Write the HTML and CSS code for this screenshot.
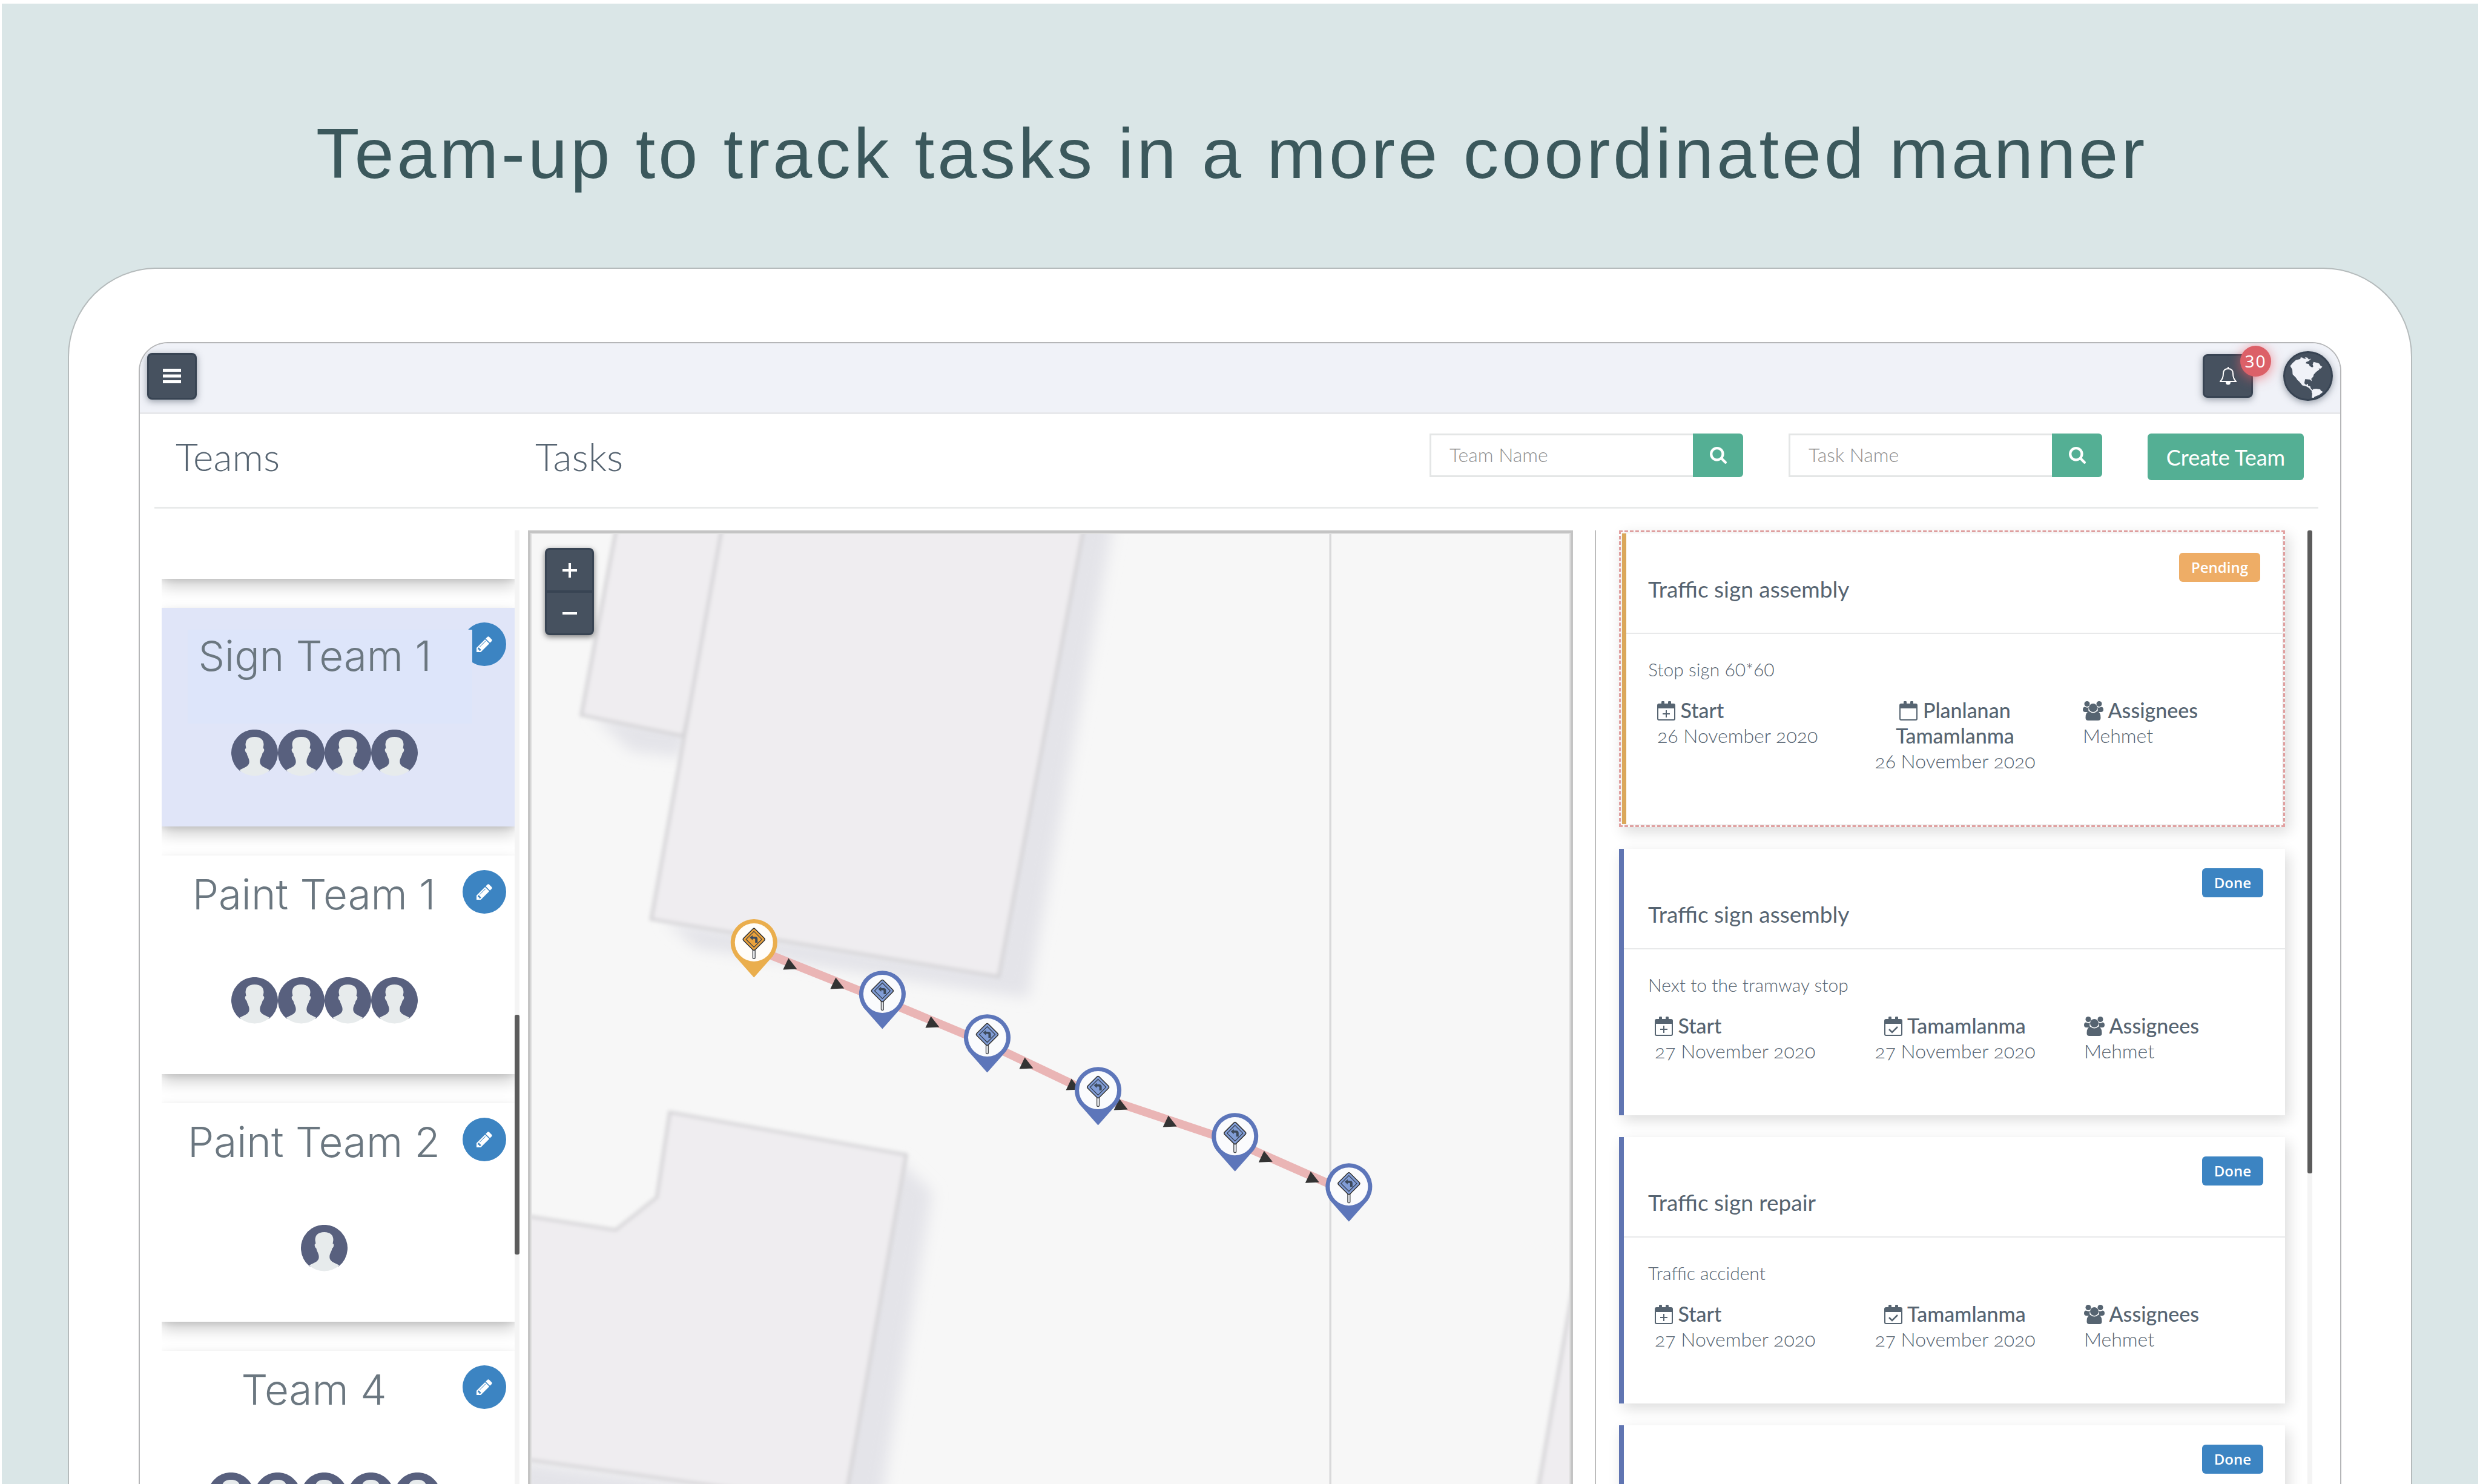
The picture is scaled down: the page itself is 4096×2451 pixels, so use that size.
FILE: index.html
```html
<!DOCTYPE html>
<html lang="en">
<head>
<meta charset="utf-8">
<title>Team tasks</title>
<meta name="viewport" content="width=device-width, initial-scale=1">
<link rel="stylesheet" href="styles.css">
</head>
<body>
<svg class="sprite" aria-hidden="true">
  <symbol id="i-pencil" viewBox="128 128 1536 1536"><path d="M491 1536l91-91-235-235-91 91v107h128v128h107zm523-928q0-22-22-22-10 0-17 7l-542 542q-7 7-7 17 0 22 22 22 10 0 17-7l542-542q7-7 7-17zm-54-192l416 416-832 832h-416v-416zm683 96q0 53-37 90l-166 166-416-416 166-165q36-38 90-38 53 0 91 38l235 234q37 39 37 91z"/></symbol>
  <symbol id="i-search" viewBox="64 128 1664 1664"><path d="M1216 832q0-185-131.500-316.500t-316.500-131.500-316.500 131.500-131.500 316.500 131.500 316.500 316.500 131.500 316.500-131.500 131.500-316.500zm512 832q0 52-38 90t-90 38q-54 0-90-38l-343-342q-179 124-399 124-143 0-273.500-55.500t-225-150-150-225-55.500-273.500 55.500-273.500 150-225 225-150 273.500-55.500 273.500 55.500 225 150 150 225 55.500 273.500q0 220-124 399l343 343q37 37 37 90z"/></symbol>
  <symbol id="i-calendar" viewBox="0 0 30 32"><path d="M3 4h4V2a2 2 0 0 1 5 0v2h6V2a2 2 0 0 1 5 0v2h4a3 3 0 0 1 3 3v22a3 3 0 0 1-3 3H3a3 3 0 0 1-3-3V7a3 3 0 0 1 3-3zM2 12v17a1 1 0 0 0 1 1h24a1 1 0 0 0 1-1V12z" fill-rule="evenodd"/></symbol>
  <symbol id="i-calendar-plus" viewBox="0 0 30 32"><use href="#i-calendar" width="30" height="32"/><path d="M14 15h2v5h5v2h-5v5h-2v-5H9v-2h5z"/></symbol>
  <symbol id="i-calendar-check" viewBox="0 0 30 32"><use href="#i-calendar" width="30" height="32"/><path d="M8 21l5 5 9-9" fill="none" stroke="currentColor" stroke-width="2.500"/></symbol>
  <symbol id="i-users" viewBox="0 0 34 32"><circle cx="7" cy="4.500" r="4.500"/><circle cx="27" cy="4.500" r="4.500"/><path d="M3 9.500q4 2 7 .5-2 5 1 8H4q-4 0-4-4 0-4 3-4.500zM31 9.500q-4 2-7 .5 2 5-1 8h7q4 0 4-4 0-4-3-4.500z"/><circle cx="17" cy="11" r="7"/><path d="M11 17q6 5 12 0 7 1 6.500 10.500Q29.500 32 25 32H9q-4.500 0-4.500-4.500Q4 18 11 17z"/></symbol>
  <symbol id="i-avatar" viewBox="0 0 77 77"><path d="M14.500 68.500a38.500 38.500 0 1 1 48 0z" fill="#58607e"/><path d="M38.500 12c-10 0-15 5-15 13l1 6c-3 0-2 6 1 8 1 6 5 9 4 16-1 6-9 8-16 12a38 38 0 0 0 50 0c-7-4-15-6-16-12-1-7 3-10 4-16 3-2 4-8 1-8l1-6c0-8-5-13-15-13z" fill="#e7ebec"/></symbol>
  <symbol id="i-sign" viewBox="-39 -97 78 97">
    <path d="M0 0L-31-35A38.500 38.500 0 1 1 31-35Z"/>
    <circle cx="0" cy="-58" r="31.500" fill="#fff" fill-opacity=".97"/>
    <path d="M-2-46v13a2 2 0 0 0 4 0v-13z" fill="#e3e5e8" stroke="#4a4d52" stroke-width="1.300"/>
    <path class="plate" d="M-2-80q2-2 4 0L17-65q2 2 0 4L2-46q-2 2-4 0L-17-61q-2-2 0-4z" stroke="#333" stroke-width="1.500"/>
    <path d="M0-76L13-63 0-50-13-63z" fill="none" stroke="#333b48" stroke-width="1.200"/>
    <path d="M-7-66l5-4v2.500h4q4 0 4 4v6H2v-5.500q0-1-1-1h-3v2.500z" fill="#3d4a5c"/>
  </symbol>
</svg>

<div class="poster">
  <h1 class="headline">Team-up to track tasks in a more coordinated manner</h1>

  <div class="device">
    <div class="screen">
      <header class="topbar">
        <button class="dark-btn menu-btn" type="button" aria-label="Menu">
          <svg width="30" height="24" viewBox="0 0 30 24"><path d="M0 0h30v5H0zM0 9.500h30v5H0zM0 19h30v5H0z"/></svg>
        </button>
        <div class="topbar-right">
          <div class="bell">
            <button class="dark-btn bell-btn" type="button" aria-label="Notifications">
              <svg width="28" height="30" viewBox="0 0 28 30"><path d="M14 3c-5 0-8 3-8 8 0 7-2 10-5 13h26c-3-3-5-6-5-13 0-5-3-8-8-8zM14 0v3" fill="none" stroke="currentColor" stroke-width="2"/><path d="M10 25h8q0 4.500-4 4.500T10 25z"/></svg>
            </button>
            <span class="bell-count">30</span>
          </div>
          <button class="globe-btn" type="button" aria-label="Language">
            <svg viewBox="827 117 306 306"><path d="M870 208L885 190 905 172 935 165 930 158 942 155 955 163 968 165 960 155 975 156 985 168 1000 163 985 178 970 183 965 192 985 196 990 208 1006 218 1013 210 1008 200 1014 183 1040 190 1050 194 1055 205 1068 213 1058 224 1045 224 1050 230 1030 245 1015 262 1012 275 1000 287 1003 302 990 291 962 290 957 315 968 325 980 318 980 330 993 333 998 348 1010 358 1003 362 987 345 970 334 945 328 925 304 915 295 905 280 885 260 883 230zM1012 350L1030 348 1055 352 1058 360 1072 368 1050 386 1020 398 1015 404 1003 403 1006 378 1001 368z"/></svg>
          </button>
        </div>
      </header>

      <div class="page-head">
        <h2 class="page-title">Teams</h2>
        <h2 class="page-title">Tasks</h2>
        <form class="search">
          <input type="text" placeholder="Team Name" aria-label="Team Name">
          <button type="button" aria-label="Search teams"><svg width="28" height="28"><use href="#i-search"/></svg></button>
        </form>
        <form class="search">
          <input type="text" placeholder="Task Name" aria-label="Task Name">
          <button type="button" aria-label="Search tasks"><svg width="28" height="28"><use href="#i-search"/></svg></button>
        </form>
        <button class="create-btn" type="button">Create Team</button>
      </div>

      <main class="board">
        <section class="teams" aria-label="Teams">
          <div class="team-list">
            <article class="team team-tail"></article>
            <article class="team team-selected">
              <h3 class="team-name">Sign Team 1</h3>
              <div class="avatars"><svg><use href="#i-avatar"/></svg><svg><use href="#i-avatar"/></svg><svg><use href="#i-avatar"/></svg><svg><use href="#i-avatar"/></svg></div>
              <button class="edit-btn" type="button" aria-label="Edit Sign Team 1"><svg width="26" height="26"><use href="#i-pencil"/></svg></button>
            </article>
            <article class="team">
              <h3 class="team-name">Paint Team 1</h3>
              <div class="avatars"><svg><use href="#i-avatar"/></svg><svg><use href="#i-avatar"/></svg><svg><use href="#i-avatar"/></svg><svg><use href="#i-avatar"/></svg></div>
              <button class="edit-btn" type="button" aria-label="Edit Paint Team 1"><svg width="26" height="26"><use href="#i-pencil"/></svg></button>
            </article>
            <article class="team">
              <h3 class="team-name">Paint Team 2</h3>
              <div class="avatars"><svg><use href="#i-avatar"/></svg></div>
              <button class="edit-btn" type="button" aria-label="Edit Paint Team 2"><svg width="26" height="26"><use href="#i-pencil"/></svg></button>
            </article>
            <article class="team">
              <h3 class="team-name">Team 4</h3>
              <div class="avatars"><svg><use href="#i-avatar"/></svg><svg><use href="#i-avatar"/></svg><svg><use href="#i-avatar"/></svg><svg><use href="#i-avatar"/></svg><svg><use href="#i-avatar"/></svg></div>
              <button class="edit-btn" type="button" aria-label="Edit Team 4"><svg width="26" height="26"><use href="#i-pencil"/></svg></button>
            </article>
          </div>
          <div class="scroll scroll-teams"><span></span></div>
        </section>

        <section class="map" aria-label="Map">
          <svg class="map-canvas" viewBox="4 4 1719 1570" preserveAspectRatio="xMinYMin slice">
            <defs>
              <filter id="soft" x="-20%" y="-20%" width="140%" height="140%"><feGaussianBlur stdDeviation="11"/></filter>
              <filter id="edge"><feGaussianBlur stdDeviation="3"/></filter>
            </defs>
            <g transform="translate(-17 -22) scale(1.131 1.018)">
              <g fill="#e4e4e9" filter="url(#soft)">
                <path d="M110 322L165 380 240 390 250 340zM215 655L262 700 745 780 871 0 800 0 690 730z"/>
                <path d="M555 1040L605 1095 530 1600 440 1600zM0 1530L300 1575 300 1640 0 1640z"/>
              </g>
              <g fill="#efedf0" stroke="#d5d4d7" stroke-width="5" filter="url(#edge)">
                <path d="M147 0L93 321 242 355 310 0z"/>
                <path d="M301 0L195 652 702 745 829 0z"/>
                <path d="M0 1131L143 1156 203 1103 222 965 567 1034 477 1600 0 1526z"/>
                <path d="M1545 1220L1487 1590H1600z"/>
              </g>
              <path d="M1186 0V1600" stroke="#d9d9da" stroke-width="3"/>
            </g>
            <path d="M373 690L585 775 758 847 941 934 1167 1010 1355 1093" fill="none" stroke="#eab5b5" stroke-width="14"/>
            <g fill="#333">
              <path id="arrow" d="M430 706L444 724 421 725z"/>
              <use href="#arrow" x="78" y="32"/><use href="#arrow" x="235" y="96"/><use href="#arrow" x="390" y="164"/><use href="#arrow" x="467" y="199"/><use href="#arrow" x="546" y="232"/><use href="#arrow" x="627" y="260"/><use href="#arrow" x="785" y="318"/><use href="#arrow" x="862" y="352"/>
            </g>
            <g class="pin-pending"><use href="#i-sign" x="334" y="641" width="78" height="97"/></g>
            <g class="pin-done">
              <use href="#i-sign" x="546" y="726" width="78" height="97"/>
              <use href="#i-sign" x="719" y="798" width="78" height="97"/>
              <use href="#i-sign" x="902" y="885" width="78" height="97"/>
              <use href="#i-sign" x="1128" y="961" width="78" height="97"/>
              <use href="#i-sign" x="1316" y="1044" width="78" height="97"/>
            </g>
          </svg>
          <div class="zoom">
            <button type="button" aria-label="Zoom in"><svg width="24" height="24" viewBox="0 0 24 24"><path d="M10 0h4v10h10v4H14v10h-4V14H0v-4h10z"/></svg></button>
            <button type="button" aria-label="Zoom out"><svg width="24" height="24" viewBox="0 0 24 24"><path d="M0 10h24v4H0z"/></svg></button>
          </div>
        </section>

        <section class="tasks" aria-label="Tasks">
          <div class="task-list">
            <article class="task task-pending">
              <div class="task-inner">
                <header class="task-head"><h3>Traffic sign assembly</h3><span class="tag tag-pending">Pending</span></header>
                <p class="task-note">Stop sign 60*60</p>
                <dl class="facts">
                  <div><dt><svg width="30" height="32"><use href="#i-calendar-plus"/></svg> Start</dt><dd>26 November 2020</dd></div>
                  <div class="mid"><dt><svg width="30" height="32"><use href="#i-calendar"/></svg> Planlanan Tamamlanma</dt><dd>26 November 2020</dd></div>
                  <div><dt><svg width="34" height="32"><use href="#i-users"/></svg> Assignees</dt><dd>Mehmet</dd></div>
                </dl>
              </div>
            </article>
            <article class="task">
              <header class="task-head"><h3>Traffic sign assembly</h3><span class="tag">Done</span></header>
              <p class="task-note">Next to the tramway stop</p>
              <dl class="facts">
                <div><dt><svg width="30" height="32"><use href="#i-calendar-plus"/></svg> Start</dt><dd>27 November 2020</dd></div>
                <div class="mid"><dt><svg width="30" height="32"><use href="#i-calendar-check"/></svg> Tamamlanma</dt><dd>27 November 2020</dd></div>
                <div><dt><svg width="34" height="32"><use href="#i-users"/></svg> Assignees</dt><dd>Mehmet</dd></div>
              </dl>
            </article>
            <article class="task">
              <header class="task-head"><h3>Traffic sign repair</h3><span class="tag">Done</span></header>
              <p class="task-note">Traffic accident</p>
              <dl class="facts">
                <div><dt><svg width="30" height="32"><use href="#i-calendar-plus"/></svg> Start</dt><dd>27 November 2020</dd></div>
                <div class="mid"><dt><svg width="30" height="32"><use href="#i-calendar-check"/></svg> Tamamlanma</dt><dd>27 November 2020</dd></div>
                <div><dt><svg width="34" height="32"><use href="#i-users"/></svg> Assignees</dt><dd>Mehmet</dd></div>
              </dl>
            </article>
            <article class="task">
              <header class="task-head"><span class="tag">Done</span></header>
            </article>
          </div>
          <div class="scroll scroll-tasks"><span></span></div>
        </section>
      </main>
    </div>
  </div>
</div>
</body>
</html>
```
FILE: styles.css
```css
* { box-sizing: border-box; }

body {
  margin: 0;
  height: 100vh;
  overflow: hidden;
  padding: 6px 3px 0;
  background: #fff;
  color: #566471;
  font-family: Lato, "Open Sans", sans-serif;
  font-size: 32px;
}

h1, h2, h3, p, dl, dd { margin: 0; font-weight: 400; }

button {
  padding: 0;
  border: 0;
  font: inherit;
  color: #fff;
  display: flex;
  align-items: center;
  justify-content: center;
}

svg { fill: currentColor; }
.sprite { position: absolute; width: 0; height: 0; }

.poster {
  height: 100%;
  display: flex;
  flex-direction: column;
  background: #dae6e7;
}

.headline {
  padding: 182px 0 122px 519px;
  color: #3b585c;
  font: 117px/132px "Liberation Sans", Arial, sans-serif;
  letter-spacing: 5px;
  white-space: nowrap;
}

.device {
  flex: 1;
  min-height: 0;
  margin: 0 109px;
  padding: 121px 115px 0;
  background: #fff;
  border: 2px solid #b5bbbc;
  border-bottom: 0;
  border-radius: 147px 147px 0 0;
}

.screen {
  height: 100%;
  display: flex;
  flex-direction: column;
  overflow: hidden;
  background: #fff;
  border: 2px solid #b5b6b8;
  border-bottom: 0;
  border-radius: 48px 48px 0 0;
}

/* Top bar */
.topbar {
  flex: none;
  height: 117px;
  display: flex;
  align-items: center;
  justify-content: space-between;
  padding: 0 12px 6px 12px;
  background: #f0f2f8;
  border-bottom: 3px solid #e7e8eb;
}
.topbar-right { display: flex; align-items: center; gap: 50px; }

.dark-btn, .globe-btn {
  background: #46515f;
  border: 3px solid #384453;
  border-radius: 8px;
  box-shadow: 0 3px 12px rgba(56, 68, 83, .5);
}
.menu-btn { width: 82px; height: 77px; }
.bell { position: relative; }
.bell-btn { width: 83px; height: 72px; }
.bell-count {
  position: absolute;
  top: -14px;
  right: -30px;
  width: 51px;
  height: 51px;
  border-radius: 50%;
  background: #dc6068;
  box-shadow: 0 3px 20px rgba(235, 90, 100, .7);
  color: #fff;
  font: 28px/51px "Noto Sans", sans-serif;
  letter-spacing: 2px;
  text-align: center;
}
.globe-btn { width: 82px; height: 82px; border-radius: 50%; color: #f0f2f8; }
.globe-btn svg { width: 82px; height: 82px; flex: none; }

/* Titles and search */
.page-head {
  flex: none;
  display: grid;
  grid-template-columns: 594px 1fr auto auto auto;
  column-gap: 75px;
  align-items: start;
  height: 156px;
  margin: 0 36px 0 24px;
  padding: 32px 24px 0 35px;
  border-bottom: 3px solid #e8eaea;
}
.page-title {
  font-weight: 300;
  font-size: 64px;
  line-height: 76px;
}
.page-title:first-child { margin-right: -75px; }
.page-title + .page-title { margin-left: -75px; }
.search { display: flex; height: 72px; }
.search input {
  width: 435px;
  padding: 0 30px 4px;
  border: 3px solid #e4e6e6;
  border-right: 0;
  border-radius: 0;
  background: #fff;
  font: 300 32px Lato, sans-serif;
}
.search input::placeholder { color: #8e8e8e; opacity: 1; }
.search button { width: 83px; background: #54af94; border-radius: 0 6px 6px 0; }
.create-btn {
  width: 258px;
  height: 77px;
  background: #54af94;
  border-radius: 6px;
  font-size: 36px;
  white-space: nowrap;
}

/* Three-column board */
.board {
  flex: 1;
  min-height: 0;
  display: grid;
  grid-template-columns: 591px minmax(0, 1fr) 1185px;
  grid-template-rows: 100%;
  padding: 36px 46px 0 36px;
}

.scroll { width: 8px; background: #f4f4f4; }
.scroll span { display: block; background: #5c5c5c; border-radius: 3px; }
.scroll-teams span { margin-top: 800px; height: 396px; }
.scroll-tasks span { height: 1062px; }

/* Teams */
.teams { display: flex; overflow: hidden; }
.team-list {
  flex: 1;
  display: flex;
  flex-direction: column;
  gap: 48px;
  overflow: hidden;
}
.team {
  position: relative;
  flex: none;
  height: 361px;
  padding-right: 46px;
  background: #fff;
  box-shadow: 0 12px 24px rgba(0, 0, 0, .2), 0 4px 8px rgba(0, 0, 0, .08);
}
.team-tail { height: 80px; }
.team-name {
  height: 201px;
  padding: 24px 34px 0 0;
  color: #6b7780;
  font: 300 69px/80px Inter, "Liberation Sans", sans-serif;
  text-align: center;
  white-space: nowrap;
}
.team-selected { background: #e0e5f8; padding-top: 36px; }
.team-selected .team-name {
  position: relative;
  z-index: 1;
  width: 470px;
  height: 155px;
  margin: 0 0 10px 43px;
  padding: 3px 50px 0 0;
  background: #dde5fa;
}
.avatars { display: flex; justify-content: center; }
.avatars svg { width: 77px; height: 77px; }
.edit-btn {
  position: absolute;
  top: 24px;
  right: 14px;
  width: 72px;
  height: 72px;
  border-radius: 50%;
  background: #3c84c2;
}

/* Map */
.map {
  position: relative;
  margin: 0 36px 0 14px;
  border: 4px solid #c4c4c4;
  border-bottom: 0;
  background: #f7f7f7;
  overflow: hidden;
}
.map-canvas { display: block; width: 100%; height: 100%; }
.map::after {
  content: "";
  position: absolute;
  inset: 0;
  border: 2px solid #dedede;
  border-bottom: 0;
}
.zoom {
  position: absolute;
  z-index: 1;
  top: 25px;
  left: 24px;
  background: #46515f;
  border: 3px solid #384453;
  border-radius: 8px;
  box-shadow: 0 3px 10px rgba(0, 0, 0, .5);
}
.zoom button { width: 75px; height: 67px; background: none; }
.zoom button + button { height: 71px; border-top: 4px solid #384453; }
.pin-pending { fill: #eaae4d; --plate: #eaa23c; }
.pin-done { fill: #5d76ba; --plate: #819dd6; }
.plate { fill: var(--plate); }

/* Tasks */
.tasks {
  display: flex;
  gap: 37px;
  padding-left: 38px;
  border-left: 2px solid #bcbcbc;
}
.task-list { flex: 1; display: flex; flex-direction: column; gap: 36px; }
.task {
  flex: none;
  min-height: 440px;
  padding-bottom: 77px;
  background: #fff;
  border-left: 8px solid #6075b2;
  box-shadow: 6px 8px 22px rgba(0, 0, 0, .14);
}
.task-pending {
  padding: 2px;
  border: 3px dashed #e3a2a2;
}
.task-inner { border-left: 7px solid #dba85b; padding-bottom: 83px; box-shadow: 0 0 6px rgba(0, 0, 0, .12); }
.task-head {
  position: relative;
  height: 166px;
  padding: 88px 40px 0;
  border-bottom: 2px solid #e8e9ea;
}
.task-pending .task-head { padding: 72px 36px 0; }
.task-head h3 { font-size: 37px; line-height: 40px; }
.tag {
  position: absolute;
  top: 32px;
  right: 36px;
  padding: 0 20px;
  border-radius: 6px;
  background: #3c84c2;
  color: #fff;
  font: 600 24px/48px "Open Sans", sans-serif;
}
.tag-pending { background: #eead66; }
.task-note {
  padding: 38px 40px 0;
  font-weight: 300;
  font-size: 30px;
  line-height: 40px;
}
.task-pending .task-note { padding-left: 36px; }
.facts {
  display: grid;
  grid-template-columns: 390px 319px 1fr;
  padding: 27px 0 0 51px;
  line-height: 42px;
}
.task-pending .facts { grid-template-columns: 386px 317px 1fr; }
.facts dt { font-weight: 500; font-size: 34px; }
.facts svg { vertical-align: -4px; }
.facts dd { font-weight: 300; font-variant-numeric: oldstyle-nums; }
.mid { justify-self: start; width: 300px; margin-left: -44px; text-align: center; }
```
